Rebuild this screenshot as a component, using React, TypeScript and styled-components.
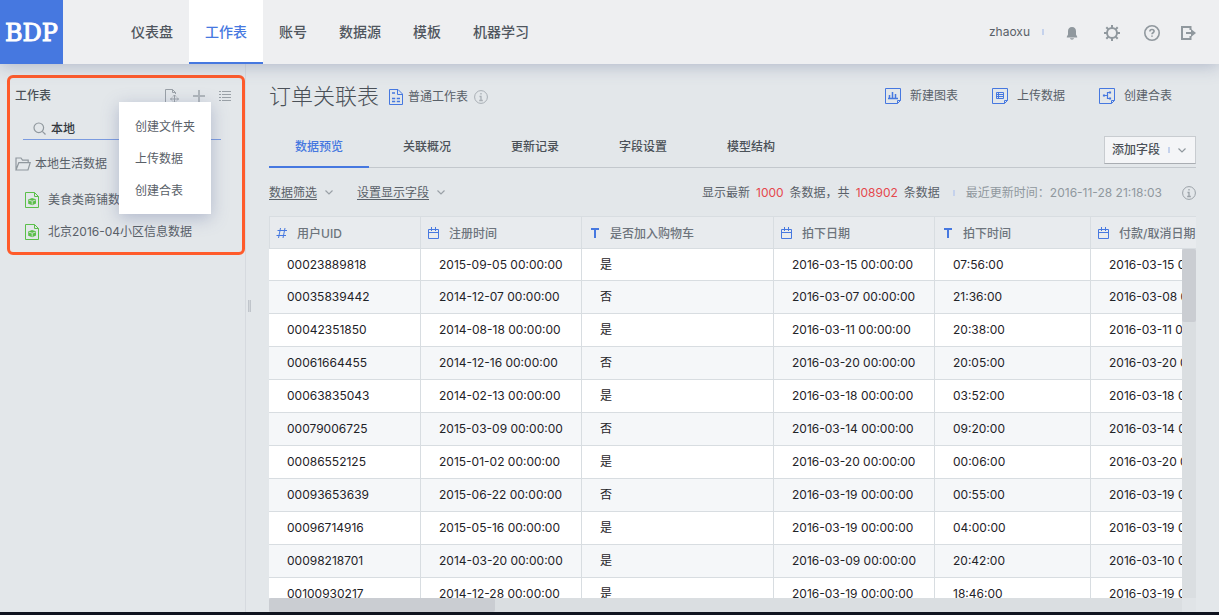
import React from "react";
import styled, { createGlobalStyle, css } from "styled-components";

const GlobalStyle = createGlobalStyle`
  *, *::before, *::after { box-sizing: border-box; }
  html, body, #root { height: 100%; }
  body {
    margin: 0;
    background: #e3e7ea;
    color: #596068;
    font: 12px/16px Inter, "Noto Sans CJK SC", sans-serif;
  }
  button, input { font: inherit; color: inherit; margin: 0; padding: 0; border: 0; background: none; }
  button { cursor: pointer; }
  a { color: inherit; text-decoration: none; }
  ul { list-style: none; margin: 0; padding: 0; }
  h1, h2 { margin: 0; font: inherit; }
  svg { display: block; flex: none; }
`;

const Page = styled.div`
  display: flex;
  flex-direction: column;
  height: 100vh;
  border-bottom: 3px solid #10141f;
`;

/* Header */
const Header = styled.header`
  position: relative;
  z-index: 1;
  display: flex;
  align-items: stretch;
  flex: none;
  height: 64px;
  background: #eeeff1;
  box-shadow: 0 2px 16px rgba(84, 98, 140, 0.35);
`;

const Logo = styled.a`
  width: 63px;
  padding-top: 2px;
  background: #4678e0;
  color: #fff;
  font: 24px/62px "DejaVu Serif", serif;
  -webkit-text-stroke: 1px #fff;
  text-align: center;
`;

const Nav = styled.nav`
  display: flex;
  flex: 1;
  margin-left: 52px;
`;

const NavLink = styled.a<{ $active?: boolean }>`
  padding: 0 16px;
  font-size: 14px;
  line-height: 64px;
  font-weight: 500;
  color: #50565e;
  ${(p) => p.$active && css`
    background: #fff;
    color: #4678e0;
    box-shadow: inset 0 -2px #4678e0;
  `}
`;

const UserArea = styled.div`
  display: flex;
  align-items: center;
  gap: 20px;
  padding-right: 23px;
  color: #90989e;
`;

const IconGroup = styled.div`
  display: flex;
  gap: 24px;
  padding-top: 2px;
`;

const UserName = styled.span`
  display: flex;
  align-items: center;
  gap: 12px;
  color: #596068;
`;

const Tick = styled.i`
  width: 2px;
  height: 6px;
  background: #c5d2ec;
`;

const IconButton = styled.button`
  display: block;
`;

/* Sidebar */
const Body = styled.div`
  display: flex;
  flex: 1;
  min-height: 0;
`;

const Sidebar = styled.aside`
  flex: none;
  width: 246px;
  padding: 11px 0 0 7px;
  border-right: 1px solid #d6dadf;
`;

const Highlight = styled.section`
  position: relative;
  height: 180px;
  padding: 8px 11px 0 5px;
  border: 3px solid #ff5b2b;
  border-radius: 6px;
`;

const SideHead = styled.div`
  display: flex;
  align-items: center;
  gap: 14px;
  height: 20px;
  color: #9aa1a7;
`;

const SideTitle = styled.h2`
  flex: 1;
  color: #4b5158;
  font-weight: 500;
`;

const Search = styled.label`
  display: flex;
  align-items: center;
  gap: 5px;
  height: 24px;
  margin: 10px 10px 0 8px;
  padding: 2px 0 0 10px;
  border-bottom: 1px solid #7b9be0;
  color: #90989e;
  input { width: 100%; outline: 0; color: #33383e; font-weight: 500; }
`;

const Tree = styled.ul`
  margin-top: 8px;
`;

const TreeRow = styled.li<{ $leaf?: boolean }>`
  display: flex;
  align-items: center;
  gap: ${(p) => (p.$leaf ? 9 : 4)}px;
  height: ${(p) => (p.$leaf ? 32 : 36)}px;
  padding: ${(p) => (p.$leaf ? "0 0 0 10px" : "0 0 4px")};
  white-space: nowrap;
  svg { color: #90989e; }
`;

const Menu = styled.ul`
  position: absolute;
  top: 24px;
  left: 109px;
  width: 92px;
  padding: 9px 0 7px;
  background: #fff;
  box-shadow: 0 4px 16px rgba(84, 98, 150, 0.35);
  button { width: 100%; height: 32px; padding-left: 16px; text-align: left; display: block; }
`;

const Splitter = styled.div`
  display: flex;
  align-items: center;
  flex: none;
  width: 23px;
  padding: 0 0 64px 2px;
  i { width: 3px; height: 12px; border: solid #c0c5cb; border-width: 0 1px; background: #d2d6da; }
`;

/* Main column */
const Main = styled.main`
  display: flex;
  flex-direction: column;
  flex: 1;
  min-width: 0;
  margin-right: 23px;
`;

const TitleRow = styled.div`
  display: flex;
  align-items: center;
  flex: none;
  height: 64px;
`;

const Title = styled.h1`
  font-size: 22px;
  line-height: 32px;
  font-weight: 300;
  color: #4b5158;
`;

const TableKind = styled.span`
  display: flex;
  align-items: center;
  gap: 5px;
  flex: 1;
  margin: 2px 0 0 10px;
  svg:last-child { margin-left: 1px; color: #a9afb5; }
`;

const Actions = styled.div`
  display: flex;
  gap: 34px;
  margin-right: 24px;
`;

const Action = styled.button`
  display: flex;
  align-items: center;
  gap: 9px;
`;

const TabBar = styled.div`
  display: flex;
  align-items: stretch;
  gap: 8px;
  flex: none;
  height: 40px;
  border-bottom: 1px solid #c3c8cd;
`;

const Tab = styled.button<{ $active?: boolean }>`
  width: 100px;
  height: 40px;
  padding-bottom: 2px;
  font-weight: 500;
  color: ${(p) => (p.$active ? "#4678e0" : "#4b5158")};
  box-shadow: ${(p) => (p.$active ? "inset 0 -2px #4678e0" : "none")};
`;

const AddField = styled.button`
  display: flex;
  align-items: center;
  justify-content: space-between;
  width: 92px;
  height: 28px;
  margin: 8px 0 0 auto;
  padding: 0 9px 0 7px;
  border: 1px solid #c8ccd0;
  border-bottom-color: #a9adb2;
  background: #f4f5f7;
  color: #4b5158;
  font-weight: 500;
  svg { color: #90989e; }
`;

const FilterBar = styled.div`
  display: flex;
  align-items: center;
  flex: none;
  height: 48px;
  padding-top: 1px;
`;

const FilterButton = styled.button`
  display: flex;
  align-items: center;
  gap: 8px;
  margin-right: 24px;
  svg { color: #9aa1a7; }
  span { text-decoration: underline; text-underline-offset: 2px; }
`;

const Summary = styled.p`
  display: flex;
  align-items: center;
  margin: 0 0 0 auto;
  white-space: nowrap;
  b { margin: 0 6px; font-weight: 400; color: #e5484d; }
  i { margin: 0 11px 0 13px; }
  time { color: #90989e; }
  svg { margin-left: 20px; color: #9aa1a7; }
`;

/* Data table */
const TableFrame = styled.div`
  position: relative;
  flex: 1;
  min-height: 0;
  overflow: hidden;
`;

const DataTable = styled.table`
  width: 1100px;
  border-collapse: separate;
  border-spacing: 0;
  table-layout: fixed;
  th, td { padding: 0; text-align: left; white-space: nowrap; border: solid #d8dde1; }
  th {
    height: 33px;
    border-width: 1px 1px 1px 0;
    background: #e8ebee;
    color: #6d747c;
    font-weight: 500;
  }
  th:first-child { box-shadow: inset 1px 0 #d8dde1; }
  td {
    height: 33px;
    border-width: 0 1px 1px 0;
    padding: 0 0 0 18px;
    background: #fff;
    color: #1f2328;
  }
  tbody tr:first-child td { height: 32px; }
  tbody tr:nth-child(even) td { background: #f5f7f9; }
`;

const HeadCell = styled.div`
  display: flex;
  align-items: center;
  gap: 9px;
  padding: 3px 0 0 7px;
  svg { color: #4678e0; margin-bottom: 3px; }
`;

const Track = styled.div<{ $axis: "x" | "y" }>`
  position: absolute;
  background: #dadee1;
  ${(p) => p.$axis === "y"
    ? "top: 33px; right: 0; bottom: 14px; width: 14px;"
    : "left: 0; right: 14px; bottom: 0; height: 14px;"}
`;

const Corner = styled.div`
  position: absolute;
  right: 0;
  bottom: 0;
  width: 14px;
  height: 14px;
  background: #e0e4e7;
`;

const Thumb = styled.div<{ $axis: "x" | "y" }>`
  background: #cacdd2;
  border-radius: 2px;
  ${(p) => p.$axis === "y" ? "height: 73px;" : "height: 14px; width: 226px;"}
`;

type IconProps = { w: number; h: number; box: string; children: React.ReactNode; fill?: boolean; width?: number };
const Svg = ({ w, h, box, children, fill, width = 1 }: IconProps) => (
  <svg width={w} height={h} viewBox={box} fill={fill ? "currentColor" : "none"}
    stroke={fill ? "none" : "currentColor"} strokeWidth={width} aria-hidden="true">{children}</svg>
);

const BellIcon = () => (
  <Svg w={16} h={16} box="0 0 16 16" fill>
    <path d="M8 2c-2.6 0-4 1.700-4 4.200v3.300L2.800 11.700V12.500h10.400v-.8L12 9.500V6.200C12 3.700 10.600 2 8 2zM6 13.300h4c-.3 1-1 1.400-2 1.400s-1.700-.4-2-1.400z" />
  </Svg>
);
const GearIcon = () => (
  <Svg w={16} h={16} box="0 0 16 16" width={2}>
    <circle cx="8" cy="8" r="5" />
    <path d="M8 0v3M8 13v3M0 8h3M13 8h3M2.300 2.300l2 2M11.700 11.700l2 2M13.700 2.300l-2 2M4.300 11.700l-2 2" />
  </Svg>
);
const HelpIcon = () => (
  <Svg w={16} h={16} box="0 0 16 16" width={1.6}>
    <circle cx="8" cy="8" r="7.200" />
    <path d="M5.900 6.500C5.900 5.200 6.800 4.500 8 4.500s2.100.7 2.100 1.800C10.100 7.700 8 7.800 8 9.300M8 10.400v1.400" />
  </Svg>
);
const ExitIcon = () => (
  <Svg w={16} h={16} box="0 0 16 16" width={2}>
    <path d="M10.500 5V2H2v12h8.500v-3M6 8h8" />
    <path d="M11 4l5 4-5 4z" fill="currentColor" stroke="none" />
  </Svg>
);
const FileMoveIcon = () => (
  <Svg w={14} h={16} box="1 0 14 16">
    <path d="M5 14.500H1.500v-13h7l3 3V6M8.500 1.500v3h3" />
    <path d="M10.500 7v8M6.500 11h8M9 8.500L10.500 7 12 8.500M9 13.500l1.500 1.500 1.500-1.500M8 9.500L6.500 11 8 12.500M13 9.500l1.500 1.500-1.500 1.500" />
  </Svg>
);
const PlusIcon = () => (
  <Svg w={12} h={12} box="0 0 12 12" width={2}><path d="M6 0v12M0 6h12" opacity=".7" /></Svg>
);
const ListIcon = () => (
  <Svg w={12} h={12} box="0 0 12 12">
    <path d="M0 1.500h2M3 1.500h9M0 4.500h2M3 4.500h9M0 7.500h2M3 7.500h9M0 10.500h2M3 10.500h9" />
  </Svg>
);
const SearchIcon = () => (
  <Svg w={13} h={13} box="0 0 13 13" width={1.200}><circle cx="5.800" cy="5.800" r="4.800" /><path d="M9.300 9.300l3.200 3.200" /></Svg>
);
const FolderIcon = () => (
  <Svg w={16} h={14} box="0 0 16 14" width={1.200}>
    <path d="M1 12.800V1h5l1.500 2.200h5.700v2.500M1 13L3.800 5.700h11.400L13 13z" />
  </Svg>
);
const SheetIcon = () => (
  <Svg w={14} h={16} box="0 0 14 16">
    <g color="#5bbf4a" stroke="currentColor">
      <path d="M.5.500h9l4 4v11H.5zM9.500.500v4h4" />
      <path d="M7 6L11 7.300v4.200L7.300 13.200 3.200 11.800V7.500z" fill="currentColor" stroke="none" />
      <path d="M4 8.200l3.200 1L10.600 8M7.200 9.200v3.500" stroke="#e3e7ea" strokeWidth=".8" />
    </g>
  </Svg>
);
const DocIcon = () => (
  <Svg w={14} h={16} box="0 0 14 16">
    <g color="#4678e0" stroke="currentColor">
      <path d="M.5.500h8.500l4.500 4.500v10.500H.5zM8.500.500v5h5" />
      <path d="M3 4h3M3 9.500h3.200M7.800 9.500H11M3 12.500h3.200M7.800 12.500H11" strokeWidth="1.300" />
    </g>
  </Svg>
);
const InfoIcon = () => (
  <Svg w={14} h={14} box="0 0 14 14">
    <circle cx="7" cy="7" r="6.400" /><path d="M7 3v1.500M5.500 6.500H7v4M5.200 10.500h3.600" strokeWidth="1.300" />
  </Svg>
);
const ChevronIcon = () => (
  <Svg w={8} h={5} box="0 0 8 5" width={1.200}><path d="M.5.500L4 4 7.500.500" /></Svg>
);
const actionGlyphs = {
  chart: <path d="M3 10.500h10M4.500 10V7M7.500 10V4M10.500 10V6" strokeWidth="1.500" />,
  table: <path d="M4.500 4.500h7v6h-7zM4.500 6.500h7M4.500 8.500h7M6.500 4.500v6" />,
  merge: <path d="M4 7.500h4M11 4.500H8.500v6H11M4.500 7v1h1V7zM10.500 4v1h1V4zM10.500 10v1h1v-1z" strokeWidth="1.200" />,
};
const ActionIcon = ({ kind }: { kind: keyof typeof actionGlyphs }) => (
  <Svg w={16} h={16} box="0 0 16 16">
    <g color="#4678e0" stroke="currentColor"><path d="M15.500 12.500V.500H.5v15h12M12.500 15.500v-3h3z" />{actionGlyphs[kind]}</g>
  </Svg>
);
const typeGlyphs = {
  number: <path d="M4.500 1L2.500 11M9 1L7 11M1.500 3.500H11M.5 8.500H10" />,
  date: <path d="M.5 2.500h10v9H.5zM.5 5.500h10M3.500 0v4M7.500 0v4" />,
  text: <path d="M2 2h8M6 2v9" strokeWidth="2" />,
};

const navItems = ["仪表盘", "工作表", "账号", "数据源", "模板", "机器学习"];
const tabs = ["数据预览", "关联概况", "更新记录", "字段设置", "模型结构"];
const actions: [keyof typeof actionGlyphs, string][] = [["chart", "新建图表"], ["table", "上传数据"], ["merge", "创建合表"]];
const columns: [keyof typeof typeGlyphs, string, number][] = [
  ["number", "用户UID", 152], ["date", "注册时间", 161], ["text", "是否加入购物车", 192],
  ["date", "拍下日期", 161], ["text", "拍下时间", 156], ["date", "付款/取消日期", 278],
];
const rows = [
  ["00023889818", "2015-09-05", "是", "2016-03-15", "07:56:00", "2016-03-15"],
  ["00035839442", "2014-12-07", "否", "2016-03-07", "21:36:00", "2016-03-08"],
  ["00042351850", "2014-08-18", "是", "2016-03-11", "20:38:00", "2016-03-11"],
  ["00061664455", "2014-12-16", "否", "2016-03-20", "20:05:00", "2016-03-20"],
  ["00063835043", "2014-02-13", "是", "2016-03-18", "03:52:00", "2016-03-18"],
  ["00079006725", "2015-03-09", "否", "2016-03-14", "09:20:00", "2016-03-14"],
  ["00086552125", "2015-01-02", "是", "2016-03-20", "00:06:00", "2016-03-20"],
  ["00093653639", "2015-06-22", "否", "2016-03-19", "00:55:00", "2016-03-19"],
  ["00096714916", "2015-05-16", "是", "2016-03-19", "04:00:00", "2016-03-19"],
  ["00098218701", "2014-03-20", "是", "2016-03-09", "20:42:00", "2016-03-10"],
  ["00100930217", "2014-12-28", "是", "2016-03-19", "18:46:00", "2016-03-19"],
];

export default function App() {
  return (
    <>
      <GlobalStyle />
      <Page>
        <Header>
          <Logo href="#">BDP</Logo>
          <Nav>
            {navItems.map((item) => (
              <NavLink key={item} href="#" $active={item === "工作表"}>{item}</NavLink>
            ))}
          </Nav>
          <UserArea>
            <UserName>zhaoxu<Tick /></UserName>
            <IconGroup>
              <IconButton aria-label="通知"><BellIcon /></IconButton>
              <IconButton aria-label="设置"><GearIcon /></IconButton>
              <IconButton aria-label="帮助"><HelpIcon /></IconButton>
            </IconGroup>
            <IconGroup>
              <IconButton aria-label="退出"><ExitIcon /></IconButton>
            </IconGroup>
          </UserArea>
        </Header>
        <Body>
          <Sidebar>
            <Highlight>
              <SideHead>
                <SideTitle>工作表</SideTitle>
                <IconButton aria-label="移动"><FileMoveIcon /></IconButton>
                <IconButton aria-label="新建"><PlusIcon /></IconButton>
                <IconButton aria-label="列表"><ListIcon /></IconButton>
              </SideHead>
              <Search>
                <SearchIcon />
                <input type="text" aria-label="搜索" defaultValue="本地" />
              </Search>
              <Tree>
                <TreeRow><FolderIcon /><a href="#">本地生活数据</a></TreeRow>
                <TreeRow $leaf><SheetIcon /><a href="#">美食类商铺数</a></TreeRow>
                <TreeRow $leaf><SheetIcon /><a href="#">北京2016-04小区信息数据</a></TreeRow>
              </Tree>
              <Menu>
                <li><button>创建文件夹</button></li>
                <li><button>上传数据</button></li>
                <li><button>创建合表</button></li>
              </Menu>
            </Highlight>
          </Sidebar>
          <Splitter><i /></Splitter>
          <Main>
            <TitleRow>
              <Title>订单关联表</Title>
              <TableKind><DocIcon />普通工作表<InfoIcon /></TableKind>
              <Actions>
                {actions.map(([kind, label]) => (
                  <Action key={kind}><ActionIcon kind={kind} />{label}</Action>
                ))}
              </Actions>
            </TitleRow>
            <TabBar>
              {tabs.map((tab) => (
                <Tab key={tab} $active={tab === "数据预览"}>{tab}</Tab>
              ))}
              <AddField>添加字段<Tick /><ChevronIcon /></AddField>
            </TabBar>
            <FilterBar>
              <FilterButton><span>数据筛选</span><ChevronIcon /></FilterButton>
              <FilterButton><span>设置显示字段</span><ChevronIcon /></FilterButton>
              <Summary>
                显示最新<b>1000</b>条数据，共<b>108902</b>条数据<Tick />
                <time>最近更新时间：2016-11-28 21:18:03</time>
                <InfoIcon />
              </Summary>
            </FilterBar>
            <TableFrame>
              <DataTable>
                <colgroup>
                  {columns.map(([, name, width]) => <col key={name} width={width} />)}
                </colgroup>
                <thead>
                  <tr>
                    {columns.map(([type, name]) => (
                      <th key={name} scope="col">
                        <HeadCell><Svg w={12} h={12} box="0 0 12 12">{typeGlyphs[type]}</Svg>{name}</HeadCell>
                      </th>
                    ))}
                  </tr>
                </thead>
                <tbody>
                  {rows.map((row) => (
                    <tr key={row[0]}>
                      {row.map((value, i) => (
                        <td key={i}>{columns[i][0] === "date" ? `${value} 00:00:00` : value}</td>
                      ))}
                    </tr>
                  ))}
                </tbody>
              </DataTable>
              <Track $axis="y"><Thumb $axis="y" /></Track>
              <Track $axis="x"><Thumb $axis="x" /></Track>
              <Corner />
            </TableFrame>
          </Main>
        </Body>
      </Page>
    </>
  );
}
